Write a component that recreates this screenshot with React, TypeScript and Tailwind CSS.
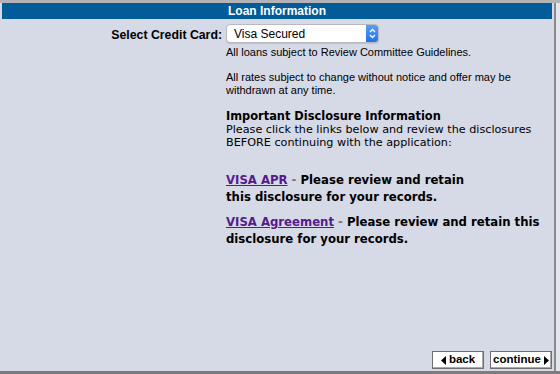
import React from "react";

const sans = { fontFamily: '"Liberation Sans", Arial, sans-serif' };
const verdana = { fontFamily: '"DejaVu Sans", Verdana, sans-serif' };

export default function App() {
  return (
    <div className="w-[560px] h-[374px] bg-[#d6d9e6] flex flex-col overflow-hidden" style={sans}>
      <div className="flex flex-1 border-t-[3px] border-[#b4b4b8]">
        {/* Main panel */}
        <div className="w-[556px] flex flex-col border-r-2 border-[#8a8a8c]">
          <div className="mx-[2px] h-[16px] bg-[#015c99] flex items-center justify-center">
            <span className="text-white font-bold text-[12px] leading-none">Loan Information</span>
          </div>

          <div className="flex mt-[5px]">
            <div className="w-[225px] text-right pr-[3px] pt-[2px] text-[12.3px] font-bold text-black">Select Credit Card:</div>
            <div className="flex flex-col pl-[1px]">
              <div className="w-[153px] h-[19px] bg-white rounded-[4px] border border-[#b9b9bf] flex items-center justify-between shadow-[0_1px_1px_rgba(0,0,0,0.12)] overflow-hidden">
                <span className="pl-[7px] text-[12px] text-black">Visa Secured</span>
                <span className="w-[12px] h-[19px] bg-gradient-to-b from-[#5aa0f6] to-[#1e6ee8] flex items-center justify-center">
                  <svg width="7" height="11" viewBox="0 0 7 11" fill="none" stroke="white" strokeWidth="1.3">
                    <path d="M1 4 L3.5 1.5 L6 4" />
                    <path d="M1 7 L3.5 9.5 L6 7" />
                  </svg>
                </span>
              </div>
              <p className="mt-[3px] text-[11px] text-black leading-[13px]">All loans subject to Review Committee Guidelines.</p>
              <p className="mt-[12px] text-[11px] text-black leading-[13px] w-[310px]">
                All rates subject to change without notice and offer may be withdrawn at any time.
              </p>

              <div className="mt-[13px] text-black" style={verdana}>
                <div className="text-[11.4px] font-bold leading-[13px]">Important Disclosure Information</div>
                <div className="text-[11.2px] leading-[13px] w-[320px]">
                  Please click the links below and review the disclosures BEFORE continuing with the application:
                </div>

                <div className="mt-[23px] text-[11.7px] font-bold leading-[17px]">
                  <a className="text-[#551a8b] underline">VISA APR</a>
                  <span className="text-[#777]"> - </span>Please review and retain
                  <br />
                  this disclosure for your records.
                </div>
                <div className="mt-[8px] text-[11.7px] font-bold leading-[17px] w-[320px]">
                  <a className="text-[#551a8b] underline">VISA Agreement</a>
                  <span className="text-[#777]"> - </span>Please review and retain this disclosure for your records.
                </div>
              </div>
            </div>
          </div>

          <div className="flex-1" />
          <div className="flex justify-end gap-[6px] pr-[2px] pb-[2px]">
            <button className="h-[18px] w-[52px] bg-white border border-[#6f6f6f] shadow-[inset_-1px_-1px_0_#aaa] flex items-center justify-center gap-[3px] text-[11.5px] font-bold text-black">
              <svg width="5" height="9" viewBox="0 0 5 9"><path d="M5 0 L0 4.5 L5 9 Z" fill="black" /></svg>
              back
            </button>
            <button className="h-[18px] w-[62px] bg-white border border-[#6f6f6f] shadow-[inset_-1px_-1px_0_#aaa] flex items-center justify-center gap-[3px] text-[11.5px] font-bold text-black">
              continue
              <svg width="5" height="9" viewBox="0 0 5 9"><path d="M0 0 L5 4.5 L0 9 Z" fill="black" /></svg>
            </button>
          </div>
        </div>
        <div className="flex-1 bg-[#e4e6ee]" />
      </div>
      <div className="h-[3px] bg-[#7c7c7c]" />
    </div>
  );
}
